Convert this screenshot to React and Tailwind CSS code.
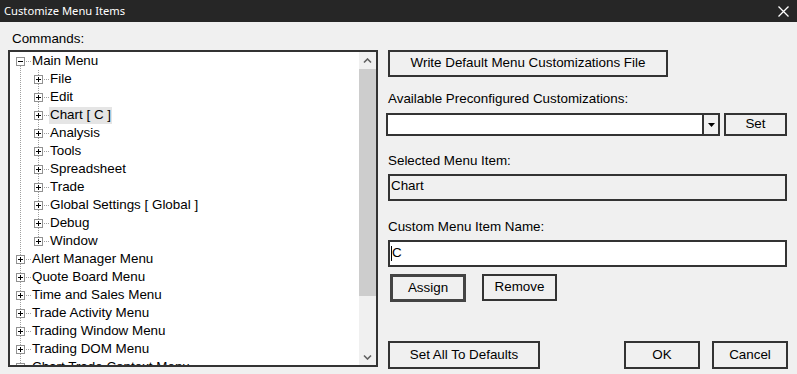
import React from 'react';

const font = { fontFamily: '"Liberation Sans", Arial, sans-serif' };

const treeItems = [
    { label: 'Main Menu', level: 0, open: true },
    { label: 'File', level: 1 },
    { label: 'Edit', level: 1 },
    { label: 'Chart [ C ]', level: 1, selected: true },
    { label: 'Analysis', level: 1 },
    { label: 'Tools', level: 1 },
    { label: 'Spreadsheet', level: 1 },
    { label: 'Trade', level: 1 },
    { label: 'Global Settings [ Global ]', level: 1 },
    { label: 'Debug', level: 1 },
    { label: 'Window', level: 1 },
    { label: 'Alert Manager Menu', level: 0 },
    { label: 'Quote Board Menu', level: 0 },
    { label: 'Time and Sales Menu', level: 0 },
    { label: 'Trade Activity Menu', level: 0 },
    { label: 'Trading Window Menu', level: 0 },
    { label: 'Trading DOM Menu', level: 0 },
    { label: 'Chart Trade Context Menu', level: 0 },
];

const Expander = ({ open }) => (
    <svg width="9" height="9" viewBox="0 0 9 9" className="relative z-10 shrink-0">
        <rect x="0.5" y="0.5" width="8" height="8" fill="#fff" stroke="#919191" />
        <line x1="2" y1="4.5" x2="7" y2="4.5" stroke="#000" />
        {!open && <line x1="4.5" y1="2" x2="4.5" y2="7" stroke="#000" />}
    </svg>
);

const TreeRow = ({ item }) => (
    <div className="h-[18px] flex items-center whitespace-nowrap">
        <div className={item.level ? 'w-[24px] shrink-0' : 'w-[6px] shrink-0'} />
        <Expander open={item.open} />
        <span className="ml-px w-[5px] border-t border-dotted border-[#a0a0a0]" />
        <span className={`h-[17px] px-px flex items-center ${item.selected ? 'bg-[#e5e5e5]' : ''}`}>
            {item.label}
        </span>
    </div>
);

const Button = ({ children, className = '' }) => (
    <div className={`border-2 border-[#333] bg-[#f0f0f0] flex items-center justify-center text-black ${className}`}>
        {children}
    </div>
);

const Chevron = ({ down }) => (
    <svg width="9" height="6" viewBox="0 0 9 6">
        <path d={down ? 'M1 1.5 L4.5 5 L8 1.5' : 'M1 4.5 L4.5 1 L8 4.5'} fill="none" stroke="#606060" strokeWidth="1.6" />
    </svg>
);

export default function App() {
    return (
        <div className="w-[797px] h-[374px] bg-[#f0f0f0] overflow-hidden text-black text-[13.4px]" style={font}>
            <div className="h-[22px] bg-[#262626] flex items-center justify-between pl-[4px] pr-[8px]">
                <span className="text-white text-[11.2px]" style={{ fontFamily: '"Noto Sans", "Open Sans", sans-serif' }}>
                    Customize Menu Items
                </span>
                <svg width="11" height="11" viewBox="0 0 11 11">
                    <path d="M0.5 0.5 L10.5 10.5 M10.5 0.5 L0.5 10.5" stroke="#fff" strokeWidth="1.3" />
                </svg>
            </div>

            <div className="flex">
                <div className="w-[378px] pl-[8px]">
                    <div className="mt-[9px] ml-[4px] h-[15px] leading-[15px]">Commands:</div>
                    <div className="mt-[4px] w-[370px] h-[317px] border-2 border-[#333] bg-white flex">
                        <div className="relative flex-1 overflow-hidden">
                            <span className="absolute left-[10px] top-[14px] bottom-0 border-l border-dotted border-[#a0a0a0]" />
                            <span className="absolute left-[28px] top-[18px] h-[171px] border-l border-dotted border-[#a0a0a0]" />
                            {treeItems.map(item => (
                                <TreeRow key={item.label} item={item} />
                            ))}
                        </div>
                        <div className="w-[17px] bg-[#f0f0f0] flex flex-col">
                            <div className="h-[17px] flex items-center justify-center"><Chevron /></div>
                            <div className="h-[227px] bg-[#cdcdcd]" />
                            <div className="flex-1" />
                            <div className="h-[17px] flex items-center justify-center"><Chevron down /></div>
                        </div>
                    </div>
                </div>

                <div className="ml-[8px] w-[402px] flex flex-col">
                    <Button className="mt-[28px] ml-[2px] w-[280px] h-[27px]">Write Default Menu Customizations File</Button>
                    <div className="mt-[14px] ml-[2px] h-[15px] leading-[15px]">Available Preconfigured Customizations:</div>
                    <div className="mt-[7px] flex">
                        <div className="w-[334px] h-[23px] border-2 border-[#333] bg-white flex justify-end">
                            <div className="w-[16px] border-l-2 border-[#333] bg-[#f0f0f0] flex items-center justify-center">
                                <svg width="7" height="4" viewBox="0 0 7 4"><path d="M0 0 H7 L3.5 4 Z" fill="#000" /></svg>
                            </div>
                        </div>
                        <Button className="ml-[4px] w-[63px] h-[23px]">Set</Button>
                    </div>
                    <div className="mt-[17px] ml-[2px] h-[15px] leading-[15px]">Selected Menu Item:</div>
                    <div className="mt-[6px] ml-[2px] w-[399px] h-[27px] border-2 border-[#333] flex items-center pl-[1px] pb-[2px]">Chart</div>
                    <div className="mt-[18px] ml-[2px] h-[15px] leading-[15px]">Custom Menu Item Name:</div>
                    <div className="mt-[6px] ml-[2px] w-[399px] h-[27px] border-2 border-[#333] bg-white flex items-center pl-[1px]">
                        <span className="w-px h-[15px] bg-black" />
                        <span>C</span>
                    </div>
                    <div className="mt-[7px] ml-[4px] flex">
                        <div className="w-[76px] h-[28px] border-[3px] border-[#444] flex items-center justify-center">Assign</div>
                        <Button className="ml-[16px] w-[75px] h-[27px]">Remove</Button>
                    </div>
                    <div className="mt-[39px] ml-[2px] flex">
                        <Button className="w-[152px] h-[28px]">Set All To Defaults</Button>
                        <Button className="ml-[84px] w-[76px] h-[28px]">OK</Button>
                        <Button className="ml-[12px] w-[76px] h-[28px]">Cancel</Button>
                    </div>
                </div>
            </div>
        </div>
    );
}
